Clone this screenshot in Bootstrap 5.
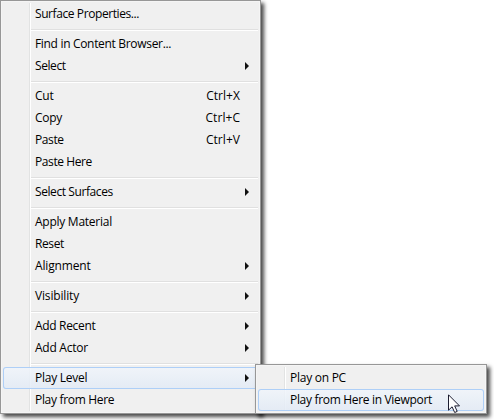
<!DOCTYPE html>
<html lang="en">
<head>
<meta charset="utf-8">
<title>Context menu</title>
<link href="https://cdn.jsdelivr.net/npm/bootstrap@5.3.0/dist/css/bootstrap.min.css" rel="stylesheet">
<style>
body{width:494px;height:420px;overflow:hidden;background:#fff;font:12px/22px "Open Sans","Noto Sans",sans-serif;letter-spacing:-.26px;color:#000}
.ctx{background:linear-gradient(90deg,transparent 26px,#e2e3e3 26px,#e2e3e3 27px,#fff 27px,#fff 28px,transparent 28px) 2px 2px/calc(100% - 4px) calc(100% - 4px) no-repeat,#f0f0f0;border:1px solid #979797;padding:2px;box-shadow:inset 0 0 0 1px #f5f5f5,3px 3px 4px rgba(0,0,0,.72)}
.ctx-main{width:261px;height:414px}
.ctx-sub{left:255px;top:364px;width:232px;height:50px}
.entry{height:22px;padding:0 9px 0 32px;white-space:nowrap}
.entry.keyed{padding-right:18px}
.entry.keyed span:last-child{letter-spacing:.05px}
.tight{letter-spacing:-.41px}
.snug{letter-spacing:-.32px}
.loose{letter-spacing:-.16px}
.hot{background:linear-gradient(rgba(240,245,251,.85),rgba(226,234,245,.85));box-shadow:inset 0 0 0 1px #aecff7;border-radius:3px}
.rule{height:2px;margin:4px 0 2px 28px;border-top:1px solid #e0e0e0;background:#fff}
.pointer{left:448px;top:394px}
</style>
<script src="https://cdn.jsdelivr.net/npm/bootstrap@5.3.0/dist/js/bootstrap.bundle.min.js"></script>
</head>
<body class="position-relative">
<svg class="d-none"><symbol id="arrow" viewBox="0 0 4 8"><path d="M0 0L4 4L0 8Z" fill="#111"/></symbol></svg>
<div class="ctx ctx-main d-flex flex-column">
  <div class="entry tight">Surface Properties...</div>
  <div class="rule"></div>
  <div class="entry snug">Find in Content Browser...</div>
  <div class="entry d-flex justify-content-between align-items-center"><span class="tight">Select</span><svg width="4" height="8"><use href="#arrow"/></svg></div>
  <div class="rule"></div>
  <div class="entry keyed d-flex justify-content-between"><span>Cut</span><span>Ctrl+X</span></div>
  <div class="entry keyed d-flex justify-content-between"><span>Copy</span><span>Ctrl+C</span></div>
  <div class="entry keyed d-flex justify-content-between"><span class="tight">Paste</span><span>Ctrl+V</span></div>
  <div class="entry tight">Paste Here</div>
  <div class="rule"></div>
  <div class="entry d-flex justify-content-between align-items-center"><span class="tight">Select Surfaces</span><svg width="4" height="8"><use href="#arrow"/></svg></div>
  <div class="rule"></div>
  <div class="entry">Apply Material</div>
  <div class="entry tight">Reset</div>
  <div class="entry d-flex justify-content-between align-items-center"><span class="loose">Alignment</span><svg width="4" height="8"><use href="#arrow"/></svg></div>
  <div class="rule"></div>
  <div class="entry d-flex justify-content-between align-items-center"><span class="loose">Visibility</span><svg width="4" height="8"><use href="#arrow"/></svg></div>
  <div class="rule"></div>
  <div class="entry d-flex justify-content-between align-items-center"><span class="snug">Add Recent</span><svg width="4" height="8"><use href="#arrow"/></svg></div>
  <div class="entry d-flex justify-content-between align-items-center"><span>Add Actor</span><svg width="4" height="8"><use href="#arrow"/></svg></div>
  <div class="rule"></div>
  <div class="entry hot d-flex justify-content-between align-items-center"><span>Play Level</span><svg width="4" height="8"><use href="#arrow"/></svg></div>
  <div class="entry snug">Play from Here</div>
</div>
<div class="ctx ctx-sub position-absolute d-flex flex-column">
  <div class="entry">Play on PC</div>
  <div class="entry hot snug">Play from Here in Viewport</div>
</div>
<svg class="pointer position-absolute" width="13" height="20" viewBox="0 0 13 20"><path d="M.5.8V16.2L4.1 12.8L6.7 18.5L9.2 17.4L6.7 11.9H11.5Z" fill="#fff" stroke="#1c1c30" stroke-width="1"/></svg>
</body>
</html>
